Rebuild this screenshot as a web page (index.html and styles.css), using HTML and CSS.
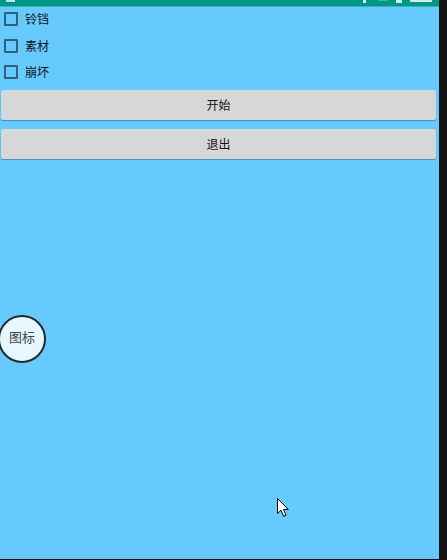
FILE: index.html
```html
<!DOCTYPE html>
<html lang="zh">
<head>
<meta charset="utf-8">
<link rel="stylesheet" href="styles.css">
</head>
<body>
<div class="screen">
  <div class="main">
    <div class="statusbar">
      <span class="sb-left"></span>
      <div class="sb-right">
        <span class="sb-icon sb-a"></span>
        <span class="sb-icon sb-b"></span>
        <span class="sb-icon sb-c"></span>
        <span class="sb-time"></span>
      </div>
    </div>
    <div class="content">
      <label class="row"><span class="box"></span><span class="lbl">铃铛</span></label>
      <label class="row"><span class="box"></span><span class="lbl">素材</span></label>
      <label class="row"><span class="box"></span><span class="lbl">崩坏</span></label>
      <div class="buttons">
        <button class="btn">开始</button>
        <button class="btn">退出</button>
      </div>
    </div>
    <div class="float-icon">图标</div>
    <svg class="cursor" width="13" height="20" viewBox="0 0 13 20">
      <path d="M0.5 0.5 L0.5 15.5 L4 12.2 L6.6 18.3 L9 17.3 L6.5 11.4 L11.3 11.4 Z" fill="#fff" stroke="#000" stroke-width="1" stroke-linejoin="miter"/>
    </svg>
  </div>
  <div class="edge"></div>
</div>
</body>
</html>
```
FILE: styles.css
```css
html, body {
  margin: 0;
  padding: 0;
  width: 447px;
  height: 560px;
  overflow: hidden;
  background: #111;
  font-family: "Noto Sans CJK SC", "Noto Sans", sans-serif;
}
.screen {
  display: flex;
  width: 447px;
  height: 560px;
}
.main {
  position: relative;
  width: 439px;
  height: 559px;
  background: #66caff;
  overflow: hidden;
}
.edge {
  width: 8px;
  height: 560px;
  background: #131313;
}
.statusbar {
  height: 6px;
  background: #009686;
  display: flex;
  justify-content: space-between;
  align-items: flex-start;
  border-bottom: 1px solid #3fb0b0;
  box-sizing: content-box;
}
.sb-left {
  margin-left: 6px;
  width: 9px;
  height: 2px;
  background: #bfe6df;
}
.sb-right {
  display: flex;
  align-items: flex-start;
  gap: 8px;
  margin-right: 7px;
}
.sb-icon {
  display: block;
  height: 2px;
  background: #d6efea;
}
.sb-a { width: 3px; height: 3px; }
.sb-b { width: 10px; height: 1px; background: #4fb0a4; margin-left: 4px; }
.sb-c { width: 6px; height: 3px; }
.sb-time { width: 22px; height: 2px; background: #cfece7; display: block; }
.content {
  display: flex;
  flex-direction: column;
}
.row {
  display: flex;
  align-items: center;
  height: 26.5px;
  padding-left: 4px;
  gap: 7px;
}
.row:first-child { margin-top: -1px; }
.box {
  width: 14px;
  height: 14px;
  box-sizing: border-box;
  border: 2px solid #32607c;
  border-radius: 1px;
}
.lbl {
  font-size: 12px;
  color: #111;
  line-height: 1;
}
.buttons {
  display: flex;
  flex-direction: column;
  gap: 9px;
  margin: 4px 3px 0 1px;
}
.btn {
  height: 30px;
  width: 100%;
  border: none;
  border-radius: 2px;
  background: #d6d7d7;
  box-shadow: 0 1px 1px rgba(0, 0, 0, 0.3);
  font-family: "Noto Sans CJK SC", "Noto Sans", sans-serif;
  font-size: 12px;
  color: #111;
  padding: 0;
}
.float-icon {
  position: absolute;
  left: -2px;
  top: 315px;
  width: 48px;
  height: 48px;
  box-sizing: border-box;
  border: 2px solid #1e2a30;
  border-radius: 50%;
  background: #e6f7ff;
  display: flex;
  align-items: center;
  justify-content: center;
  padding-bottom: 5px;
  font-size: 13px;
  color: #444;
}
.cursor {
  position: absolute;
  left: 277px;
  top: 498px;
}
```
